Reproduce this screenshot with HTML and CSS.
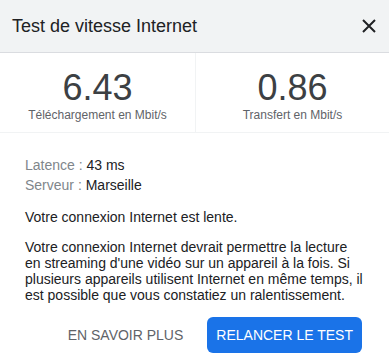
FILE: index.html
```html
<!DOCTYPE html>
<html lang="fr">
<head>
<meta charset="utf-8">
<link rel="stylesheet" href="styles.css">
</head>
<body>
<div class="dialog">
  <header class="head">
    <h1 class="title">Test de vitesse Internet</h1>
    <button class="close" aria-label="Fermer">
      <svg width="14" height="14" viewBox="0 0 14 14"><path d="M1 1L13 13M13 1L1 13" stroke="#202124" stroke-width="2" fill="none"/></svg>
    </button>
  </header>
  <section class="stats">
    <div class="stat">
      <div class="num">6.43</div>
      <div class="lbl">Téléchargement en Mbit/s</div>
    </div>
    <div class="stat">
      <div class="num">0.86</div>
      <div class="lbl">Transfert en Mbit/s</div>
    </div>
  </section>
  <section class="body">
    <div class="info">
      <div><span class="key">Latence :</span> 43 ms</div>
      <div><span class="key">Serveur :</span> Marseille</div>
    </div>
    <p class="msg">Votre connexion Internet est lente.</p>
    <p class="desc">Votre connexion Internet devrait permettre la lecture en streaming d'une vidéo sur un appareil à la fois. Si plusieurs appareils utilisent Internet en même temps, il est possible que vous constatiez un ralentissement.</p>
  </section>
  <footer class="actions">
    <button class="btn-text">EN SAVOIR PLUS</button>
    <button class="btn-primary">RELANCER LE TEST</button>
  </footer>
</div>
</body>
</html>
```
FILE: styles.css
```css
html, body { margin: 0; padding: 0; background: #fff; }
body { font-family: "Liberation Sans", Arial, sans-serif; color: #202124; width: 389px; overflow: hidden; }
.dialog { width: 389px; }
.head {
  height: 52px; background: #f1f3f4; border-bottom: 1px solid #dadce0;
  display: flex; align-items: center; justify-content: space-between;
  padding: 0 13px 0 12px; box-sizing: content-box;
}
.title { margin: 0; font-size: 18px; font-weight: normal; color: #202124; }
.close { border: 0; background: none; padding: 0; width: 14px; height: 14px; display: flex; cursor: pointer; }
.stats {
  display: grid; grid-template-columns: 196px 1fr;
  border-bottom: 1px solid #f1f3f4; height: 79px;
}
.stat { display: flex; flex-direction: column; align-items: center; padding-top: 15px; }
.stat:first-child { border-right: 1px solid #f1f3f4; }
.num { font-size: 36px; line-height: 40px; color: #3c4043; }
.lbl { font-size: 12px; line-height: 14px; color: #5f6368; }
.body { padding: 22px 25px 0 25px; font-size: 14px; }
.info { line-height: 20px; color: #202124; }
.key { color: #80868b; }
.msg { margin: 12px 0 0; line-height: 20px; }
.desc { margin: 12px 0 0; line-height: 16px; }
.actions { display: flex; justify-content: flex-end; align-items: center; gap: 24px; padding: 14px 27px 0 0; }
.btn-text { border: 0; background: none; font: inherit; font-size: 14px; color: #5f6368; padding: 0; }
.btn-primary {
  border: 0; background: #1a73e8; color: #fff; font: inherit; font-size: 14px;
  height: 36px; padding: 0 9px; border-radius: 6px;
}
```
